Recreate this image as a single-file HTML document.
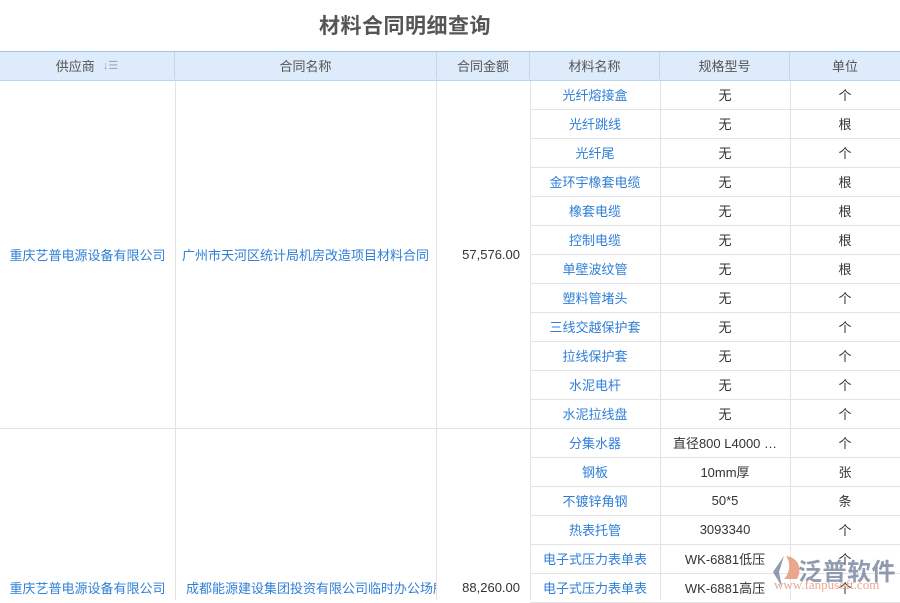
<!DOCTYPE html>
<html><head><meta charset="utf-8"><style>
*{margin:0;padding:0;box-sizing:border-box}
body{width:900px;height:600px;overflow:hidden;background:#fff;font-family:"Liberation Sans","Noto Sans CJK SC",sans-serif;font-size:13px;position:relative}
.t{position:absolute;left:0;width:900px;top:8px;height:34px}
.t span{position:absolute;left:319px;top:2px;font-size:21px;font-weight:bold;color:#555;letter-spacing:0.5px}
.hd{position:absolute;top:51px;left:0;width:900px;height:30px;background:#ddebfa;border-top:1px solid #9fc3e8;border-bottom:1px solid #bcd4ee}
.c{position:absolute;display:flex;align-items:center;justify-content:center;white-space:nowrap;overflow:hidden}
.h{color:#555;height:27px;top:0;border-right:1px solid #c3d6ec}
.vl{position:absolute;top:81px;bottom:0;width:1px;background:#e3e3e3}
.hl{position:absolute;height:1px;background:#e3e3e3}
.b{color:#2f7fd8}
.k{color:#333}
</style></head><body>
<div class="t"><span>材料合同明细查询</span></div>
<div class="hd">
<div class="c h" style="left:0;width:175px">供应商<span style="color:#9ab;font-size:11px;margin-left:8px">↓☰</span></div>
<div class="c h" style="left:175px;width:262px">合同名称</div>
<div class="c h" style="left:437px;width:93px">合同金额</div>
<div class="c h" style="left:530px;width:130px">材料名称</div>
<div class="c h" style="left:660px;width:130px">规格型号</div>
<div class="c h" style="left:790px;width:110px;border:none">单位</div>
</div>
<div class="vl" style="left:175px"></div>
<div class="vl" style="left:436px"></div>
<div class="vl" style="left:530px"></div>
<div class="vl" style="left:660px"></div>
<div class="vl" style="left:790px"></div>
<div class="hl" style="left:0;width:900px;top:428px"></div>
<div id="rows"></div>
<div class="c b" style="left:0;width:175px;top:240px;height:28px">重庆艺普电源设备有限公司</div>
<div class="c b" style="left:175px;width:261px;top:240px;height:28px">广州市天河区统计局机房改造项目材料合同</div>
<div class="c k" style="left:437px;width:83px;top:240px;height:28px;justify-content:flex-end">57,576.00</div>
<div class="c b" style="left:0;width:175px;top:573px;height:28px">重庆艺普电源设备有限公司</div>
<div class="c b" style="left:175px;width:261px;top:573px;height:28px;justify-content:flex-start;padding-left:11px">成都能源建设集团投资有限公司临时办公场所</div>
<div class="c k" style="left:437px;width:83px;top:573px;height:28px;justify-content:flex-end">88,260.00</div>
<script>
var d=[["光纤熔接盒","无","个"],["光纤跳线","无","根"],["光纤尾","无","个"],["金环宇橡套电缆","无","根"],["橡套电缆","无","根"],["控制电缆","无","根"],["单壁波纹管","无","根"],["塑料管堵头","无","个"],["三线交越保护套","无","个"],["拉线保护套","无","个"],["水泥电杆","无","个"],["水泥拉线盘","无","个"],["分集水器","直径800 L4000 …","个"],["钢板","10mm厚","张"],["不镀锌角钢","50*5","条"],["热表托管","3093340","个"],["电子式压力表单表","WK-6881低压","个"],["电子式压力表单表","WK-6881高压","个"]];
var h="";
for(var i=0;i<d.length;i++){var y=80+i*29;
h+='<div class="hl" style="left:530px;width:370px;top:'+(y+29)+'px"></div>';
h+='<div class="c b" style="left:530px;width:130px;top:'+y+'px;height:29px">'+d[i][0]+'</div>';
h+='<div class="c k" style="left:660px;width:130px;top:'+y+'px;height:29px">'+d[i][1]+'</div>';
h+='<div class="c k" style="left:790px;width:110px;top:'+y+'px;height:29px">'+d[i][2]+'</div>';}
document.getElementById("rows").innerHTML=h;
</script>
<div style="position:absolute;left:768px;top:550px;width:132px;height:50px;opacity:0.85;white-space:nowrap">
<svg width="34" height="36" viewBox="0 0 34 36" style="position:absolute;left:2px;top:3px"><path d="M14 3 L3 19 L12 34 L9 19 Z" fill="#7d8aa3"/><path d="M16 3 C28 4 33 16 27 26 L14 26 C20 20 21 10 16 3Z" fill="#e69a7a"/></svg>
<span style="position:absolute;left:30px;top:2px;font-size:24px;font-weight:bold;color:#7d8aa3;letter-spacing:0.5px;white-space:nowrap">泛普软件</span>
<span style="position:absolute;left:6px;top:27px;font-size:13px;color:#e69a7a;font-family:'Liberation Serif',serif;white-space:nowrap">www.fanpusoft.com</span>
</div>
</body></html>
